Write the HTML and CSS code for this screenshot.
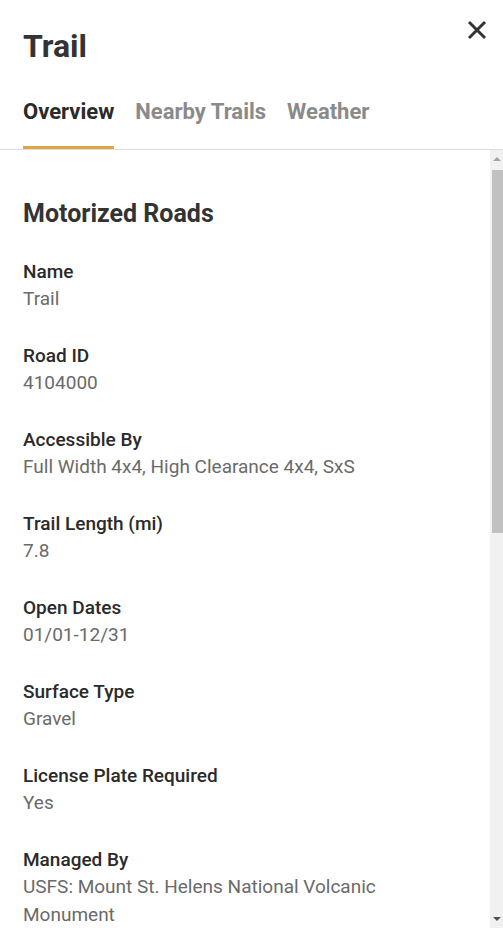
FILE: index.html
```html
<!DOCTYPE html>
<html lang="en">
<head>
<meta charset="utf-8">
<link rel="stylesheet" href="styles.css">
</head>
<body>
<div class="panel">
  <header class="head">
    <div class="title-row">
      <h1 class="title">Trail</h1>
      <button class="close" aria-label="Close">
        <svg width="20" height="20" viewBox="0 0 20 20"><path d="M2 2 L18 18 M18 2 L2 18" stroke="#333" stroke-width="3" fill="none"/></svg>
      </button>
    </div>
    <nav class="tabs">
      <span class="tab active">Overview</span>
      <span class="tab">Nearby Trails</span>
      <span class="tab">Weather</span>
    </nav>
  </header>
  <div class="body-row">
    <main class="content">
      <h2 class="section">Motorized Roads</h2>
      <dl class="fields">
        <div class="field"><dt>Name</dt><dd>Trail</dd></div>
        <div class="field"><dt>Road ID</dt><dd>4104000</dd></div>
        <div class="field"><dt>Accessible By</dt><dd>Full Width 4x4, High Clearance 4x4, SxS</dd></div>
        <div class="field"><dt>Trail Length (mi)</dt><dd>7.8</dd></div>
        <div class="field"><dt>Open Dates</dt><dd>01/01-12/31</dd></div>
        <div class="field"><dt>Surface Type</dt><dd>Gravel</dd></div>
        <div class="field"><dt>License Plate Required</dt><dd>Yes</dd></div>
        <div class="field"><dt>Managed By</dt><dd>USFS: Mount St. Helens National Volcanic Monument</dd></div>
      </dl>
    </main>
    <div class="scrollbar">
      <span class="arrow up"></span>
      <div class="track"><div class="thumb"></div></div>
      <span class="arrow down"></span>
    </div>
  </div>
</div>
</body>
</html>
```
FILE: styles.css
```css
* { box-sizing: border-box; }
html, body { margin: 0; padding: 0; height: 100%; overflow: hidden; background: #fff; }
body { font-family: Roboto, "Noto Sans", sans-serif; color: #333; }
.panel { display: flex; flex-direction: column; height: 928px; }
.head { border-bottom: 1px solid #dedede; padding: 0 0 0 23px; flex: none; }
.title-row { display: flex; justify-content: space-between; align-items: flex-start; height: 93px; }
.title { margin: 0; padding-top: 24px; font-size: 32px; line-height: 44px; font-weight: 700; color: #333; }
.close { background: none; border: 0; padding: 0; margin: 20px 16px 0 0; width: 20px; height: 20px; cursor: pointer; }
.close svg { display: block; }
.tabs { display: flex; gap: 21px; height: 56px; }
.tab { font-size: 22px; font-weight: 700; color: #8a8a8a; line-height: 37px; height: 56px; border-bottom: 3px solid transparent; }
.tab.active { color: #2a2a2a; border-bottom-color: #e2a545; }
.body-row { flex: 1; display: flex; min-height: 0; }
.content { flex: 1; overflow: hidden; padding: 49px 20px 0 23px; }
.section { margin: 0 0 30px; font-size: 25px; line-height: 30px; font-weight: 700; color: #333; }
.fields { margin: 0; }
.field { margin: 0 0 30px; }
.field dt { font-size: 19px; line-height: 26px; font-weight: 500; color: #2a2a2a; }
.field dd { margin: 0; font-size: 19px; line-height: 28px; color: #6a6a6a; }
.scrollbar { flex: none; width: 13px; background: #f1f1f1; display: flex; flex-direction: column; align-items: center; }
.arrow { flex: none; height: 17px; width: 0; border-left: 4px solid transparent; border-right: 4px solid transparent; }
.arrow.up { border-bottom: 4px solid #a3a3a3; margin-top: 7px; height: 0; margin-bottom: 9px; }
.arrow.down { border-top: 4px solid #505050; height: 0; margin-top: 6px; margin-bottom: 7px; }
.track { flex: 1; width: 100%; padding-left: 2px; }
.thumb { height: 363px; background: #c1c1c1; width: 100%; }
```
